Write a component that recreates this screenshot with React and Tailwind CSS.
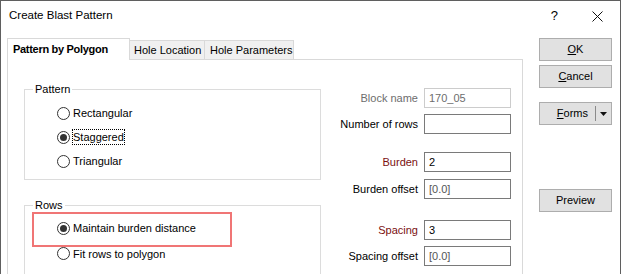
import React from 'react';

function Radio({ checked, label, focus }) {
    return (
        <div className="flex items-center gap-[3px]">
            <span className="w-[13px] h-[13px] rounded-full border border-[#333333] bg-white flex items-center justify-center shrink-0">
                {checked && <span className="w-[7px] h-[7px] rounded-full bg-[#333333]"></span>}
            </span>
            <span className={focus ? 'outline outline-1 outline-dotted outline-black leading-[14px]' : 'leading-[14px]'}>{label}</span>
        </div>
    );
}

function Field({ label, value, tone, mt }) {
    const labelColor = tone === 'muted' ? 'text-[#6d6d6d]' : tone === 'req' ? 'text-[#7b1010]' : 'text-black';
    const boxColor = tone === 'muted' ? 'border-[#cccccc] text-[#6d6d6d]' : 'border-[#7a7a7a] text-black';
    return (
        <div className={`flex items-center gap-[6px] ${mt}`}>
            <span className={labelColor}>{label}</span>
            <div className={`w-[87px] h-[20px] border ${boxColor} pl-[4px] flex items-center`}>
                {value && <span className={value.startsWith('[') ? 'text-[#555555]' : ''}>{value}</span>}
            </div>
        </div>
    );
}

function Btn({ children, mt }) {
    return (
        <div className={`h-[23px] bg-[#e1e1e1] border border-[#adadad] flex items-center justify-center ${mt}`}>
            {children}
        </div>
    );
}

export default function App() {
    return (
        <div className="w-[621px] h-[274px] bg-white border-x border-t border-[#5f5f5f] overflow-hidden flex flex-col text-[11px] text-black" style={{ fontFamily: '"Liberation Sans", Arial, sans-serif' }}>
            {/* Title bar */}
            <div className="h-[30px] shrink-0 flex items-center pl-[8px]">
                <span className="text-[11.5px]">Create Blast Pattern</span>
                <span className="ml-auto text-[13px] mr-[34px]">?</span>
                <svg width="11" height="11" viewBox="0 0 11 11" className="mr-[17px]">
                    <path d="M0.5 0.5 L10.5 10.5 M10.5 0.5 L0.5 10.5" stroke="#111" strokeWidth="1" />
                </svg>
            </div>

            <div className="flex flex-1 min-h-0 pt-[7px]">
                {/* Tabs + pane */}
                <div className="ml-[6px] w-[516px] flex flex-col">
                    <div className="flex items-end h-[22px] shrink-0">
                        <div className="w-[123px] h-[22px] border-t border-x border-[#d9d9d9] bg-white pl-[5px] flex items-center font-bold tracking-[-0.3px]">
                            Pattern by Polygon
                        </div>
                        <div className="w-[75px] h-[20px] border border-l-0 border-[#d9d9d9] bg-[#f0f0f0] pl-[4px] flex items-center">
                            Hole Location
                        </div>
                        <div className="w-[89px] h-[20px] border border-l-0 border-[#d9d9d9] bg-[#f0f0f0] pl-[5px] flex items-center">
                            Hole Parameters
                        </div>
                        <div className="flex-1 border-b border-[#d9d9d9]"></div>
                    </div>

                    <div className="flex-1 border-x border-[#d9d9d9] flex">
                        {/* Groups */}
                        <div className="ml-[16px] w-[297px] pt-[22px] flex flex-col">
                            <fieldset className="h-[98px] border border-[#dcdcdc]">
                                <legend className="ml-[8px] px-[2px] leading-[14px]">Pattern</legend>
                                <div className="pl-[32px] mt-[5px] flex flex-col">
                                    <div className="h-[24px] flex items-center"><Radio label="Rectangular" /></div>
                                    <div className="h-[24px] flex items-center"><Radio checked focus label="Staggered" /></div>
                                    <div className="h-[24px] flex items-center"><Radio label="Triangular" /></div>
                                </div>
                            </fieldset>
                            <fieldset className="mt-[18px] h-[100px] border border-[#dcdcdc] shrink-0">
                                <legend className="ml-[8px] px-[2px] leading-[14px]">Rows</legend>
                                <div className="ml-[7px] w-[200px] h-[35px] border-2 border-[#f07575] pl-[23px] pb-[3px] flex items-center">
                                    <Radio checked label="Maintain burden distance" />
                                </div>
                                <div className="pl-[32px] h-[13px] flex items-center">
                                    <Radio label="Fit rows to polygon" />
                                </div>
                            </fieldset>
                        </div>

                        {/* Fields */}
                        <div className="ml-auto mr-[11px] pt-[28px] flex flex-col items-end">
                            <Field label="Block name" value="170_05" tone="muted" mt="" />
                            <Field label="Number of rows" mt="mt-[6px]" />
                            <Field label="Burden" value="2" tone="req" mt="mt-[18px]" />
                            <Field label="Burden offset" value="[0.0]" mt="mt-[7px]" />
                            <Field label="Spacing" value="3" tone="req" mt="mt-[21px]" />
                            <Field label="Spacing offset" value="[0.0]" mt="mt-[6px]" />
                        </div>
                    </div>
                </div>

                {/* Buttons */}
                <div className="ml-[16px] w-[73px] flex flex-col">
                    <Btn mt=""><span><span className="underline">O</span>K</span></Btn>
                    <Btn mt="mt-[4px]"><span><span className="underline">C</span>ancel</span></Btn>
                    <div className="h-[23px] mt-[14px] bg-[#e1e1e1] border border-[#adadad] flex items-center">
                        <span className="ml-auto"><span className="underline">F</span>orms</span>
                        <span className="ml-[7px] w-px h-[15px] bg-[#8a8a8a]"></span>
                        <svg width="7" height="4" viewBox="0 0 7 4" className="mx-[4px]">
                            <path d="M0 0 H7 L3.5 4 Z" fill="#111" />
                        </svg>
                    </div>
                    <Btn mt="mt-[64px]">Preview</Btn>
                </div>
            </div>
        </div>
    );
}
